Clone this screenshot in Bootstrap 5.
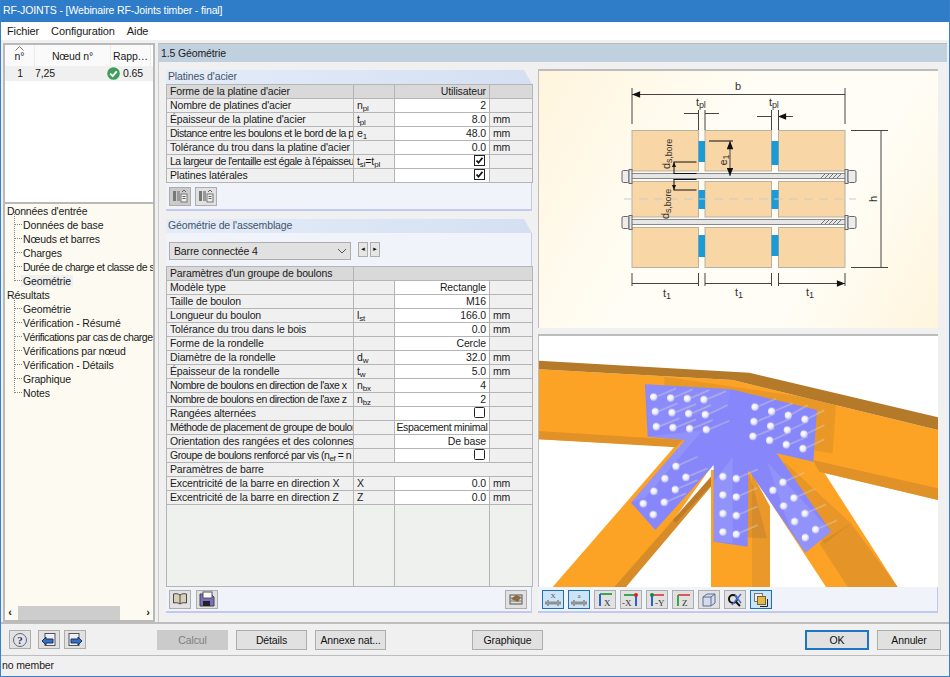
<!DOCTYPE html>
<html lang="fr">
<head>
    <meta charset="UTF-8">
    <meta name="viewport" content="width=device-width, initial-scale=1.0">
    <title>RF-JOINTS</title>
    <link rel="stylesheet" href="https://cdn.jsdelivr.net/npm/bootstrap@5.3.0/dist/css/bootstrap.min.css">
    <style>
        html, body { height: 100%; overflow: hidden; }
        body { background: #f0f0f0; font-family: "Liberation Sans", sans-serif; font-size: 10.5px; letter-spacing: -.13px; color: #1a1a1a; }
        .app-win { width: 950px; height: 677px; border-left: 1px solid #3a7fc9; border-right: 1px solid #3a7fc9; border-bottom: 1px solid #3a7fc9; }
        .title-bar { height: 22px; background: #2f7cc9; color: #fff; font-size: 10.5px; line-height: 21px; padding-left: 2px; }
        .menu-bar { height: 18px; background: #fff; font-size: 11px; line-height: 18px; padding-left: 6px; gap: 12px; }
        .main-area { height: 584px; padding: 3px 2px 0 2px; gap: 3px; border-bottom: 2px solid #bdbdbd; }

        .left-pane { width: 152px; }
        .node-list { height: 160px; background: #fff; border: 2px solid #b9b9b9; border-bottom-width: 1px; }
        .node-head { height: 21px; line-height: 22px; background: #fff; text-align: center; }
        .node-head > div { border-right: 1px solid #ececec; background: #fafafa; position: relative; }
        .sort-up { position: absolute; left: 10px; top: 1px; display: block; }
        .node-row { height: 15px; line-height: 15px; background: #f0f0f0; }
        .c-num { width: 30px; text-align: center; }
        .c-node { width: 76px; }
        .c-rap { width: 40px; }
        .tree-box { height: 420px; background: #fcfaf1; border: 2px solid #b9b9b9; border-top-width: 1px; padding: 0 0 0 2px; }
        .tree-list { line-height: 14px; white-space: nowrap; overflow: hidden; flex: 1; }
        .tree-list ul { list-style: none; margin: 0 0 0 7px; padding: 0; }
        .tree-list li { padding-left: 9px; position: relative; }
        .tree-list ul li::before { content: ""; position: absolute; left: 0; top: -6px; width: 8px; height: 13px; border-left: 1px dotted #888; border-bottom: 1px dotted #888; }
        .tree-sel { background: #f0f0f0; padding: 0 2px; margin-left: -2px; }
        .h-scroll { height: 14px; margin-left: -2px; font-size: 11px; }
        .h-scroll .thumb { width: 102px; background: #cdcdcd; margin-left: 3px; }
        .h-scroll b { width: 10px; text-align: center; line-height: 13px; }

        .right-pane { width: 789px; border-top: 1px solid #bbb; border-left: 1px solid #ccc; }
        .pane-head { height: 18px; line-height: 18px; background: #c0d0df; padding-left: 2px; font-size: 10.5px; }
        .pane-body { height: 551px; padding: 7px 8px 0 7px; gap: 6px; }
        .form-col { width: 366px; padding-top: 1px; }
        .grp-head { height: 14px; line-height: 13px; padding-left: 2px; color: #44546a; background: linear-gradient(to right, #e4ecf8, #d4e0f2); clip-path: polygon(0 0, 358px 0, 100% 100%, 0 100%); flex-shrink: 0; }
        .tool-strip { background: #f0f4fa; border-right: 1px solid #c2c8ee; border-bottom: 2px solid #c2c8ee; padding-left: 3px; flex-shrink: 0; }
        .tools-a { height: 28px; }
        .tools-b { height: 26px; }
        .select-strip { height: 33px; background: #f0f4fa; border-right: 1px solid #c2c8ee; padding: 9px 0 0 3px; gap: 7px; flex-shrink: 0; }
        .combo { width: 182px; height: 18px; line-height: 16px; background: #e1e1e1; border: 1px solid #adadad; padding-left: 4px; }
        .spin { width: 10px; height: 15px; background: #e6e6e6; border: 1px solid #adadad; font-size: 6px; line-height: 13px; text-align: center; }

        .grid-tbl { table-layout: fixed; width: 366px; border-collapse: collapse; margin: 0; }
        .grid-tbl > tbody > tr > td { height: 14px; padding: 0 3px; line-height: 13px; font-size: 10.5px; background: #f0f0f0; border: 1px solid #b5b5b5; white-space: nowrap; overflow: hidden; color: #1a1a1a; box-shadow: none; }
        .grid-tbl > tbody > tr > td.v-cell { background: #fff; text-align: right; }
        .grid-tbl > tbody > tr > td.g-cell { background: #d9d9d9; }
        .grid-tbl > tbody > tr.fill-row > td { background: #eef1ee; height: auto; }
        .grid-tbl sub { font-size: 8px; bottom: -.2em; }
        .grid-tbl > tbody > tr > td.lbl-tight, .lbl-tight { letter-spacing: -.47px; }
        .grid-tbl > tbody > tr > td.v-tight { letter-spacing: -.35px; padding: 0; }
        .sym { font-size: 10px; }
        .grow-tbl { flex: 1; min-height: 0; }
        .grow-tbl .grid-tbl { height: 100%; }
        .box-chk { display: block; margin-left: auto; margin-right: 1px; }

        .img-col { width: 400px; }
        .draw-a { height: 259px; flex-shrink: 0; background: linear-gradient(120deg, #fff5dd 0%, #fffdf5 40%, #fffdf6 70%, #fff5dd 100%); border-top: 2px solid #bcbcbc; border-left: 1px solid #bcbcbc; }
        .draw-b { height: 253px; flex-shrink: 0; margin-top: 6px; background: #fff; border-top: 2px solid #bcbcbc; border-left: 1px solid #bcbcbc; }
        .draw-a svg, .draw-b svg { display: block; }
        .tools-c { height: 26px; gap: 4px; padding-left: 4px; padding-top: 3px; align-items: flex-start; }

        .ico-btn { width: 22px; height: 19px; padding: 0; background: #e1e1e1; border: 1px solid #adadad; border-radius: 0; display: inline-flex; align-items: center; justify-content: center; }
        .ico-btn.is-on { background: #cce4f7; border: 1px solid #1f6fb2; }
        .ico-btn.is-off { background: #cbcbcb; }
        .tools-a .ico-btn { margin-right: 4px; }
        .tools-b .ico-btn { margin-right: 5px; }

        .foot-bar { height: 32px; padding-top: 6px; position: relative; border-bottom: 1px solid #bdbdbd; }
        .dlg-btn { height: 20px; width: 71px; padding: 0; font-size: 10.5px; letter-spacing: -.13px; line-height: 18px; background: #e1e1e1; border: 1px solid #adadad; border-radius: 0; color: #111; }
        .dlg-btn:disabled { background: #cbcbcb; color: #808080; border-color: #cbcbcb; opacity: 1; }
        .dlg-btn.is-def { border: 2px solid #1f74c4; line-height: 16px; }
        .w-64 { width: 64px; }
        .status-bar { height: 19px; line-height: 18px; padding-left: 1px; }
    </style>
</head>
<body>
<svg width="0" height="0" class="position-absolute">
    <defs>
        <symbol id="chk" viewBox="0 0 11 11"><rect x=".5" y=".5" width="10" height="10" fill="#fff" stroke="#222"/><path d="M2.5 5.5l2 2.2 4-5" fill="none" stroke="#111" stroke-width="1.8"/></symbol>
        <symbol id="unchk" viewBox="0 0 11 11"><rect x=".5" y=".5" width="10" height="10" rx="1" fill="#fff" stroke="#222"/></symbol>
        <symbol id="barrel" viewBox="0 0 16 14"><rect x="1" y="2" width="3" height="10" fill="#777"/><rect x="5" y="2" width="3" height="10" fill="#999"/><rect x="9" y="5" width="6" height="8" fill="#eee" stroke="#777"/><path d="M10.5 7.5h3M10.5 9.5h3M10 3l2-2 2 2" stroke="#666" fill="none"/></symbol>
        <radialGradient id="ballg" cx=".4" cy=".4" r=".7"><stop offset="0" stop-color="#fff"/><stop offset=".5" stop-color="#eeeef8"/><stop offset="1" stop-color="#b4b4e6"/></radialGradient>
        <circle id="ball" r="11" fill="url(#ballg)"/>
        <marker id="ah" viewBox="0 0 10 8" refX="10" refY="4" markerWidth="9" markerHeight="6.5" orient="auto-start-reverse"><path d="M0 0l10 4-10 4z" fill="#111"/></marker>
        <marker id="as" viewBox="0 0 10 8" refX="10" refY="4" markerWidth="5" markerHeight="4" orient="auto-start-reverse"><path d="M0 0l10 4-10 4z" fill="#111"/></marker>
    </defs>
</svg>

<div class="app-win d-flex flex-column">
    <div class="title-bar">RF-JOINTS - [Webinaire RF-Joints timber - final]</div>
    <div class="menu-bar d-flex"><span>Fichier</span><span>Configuration</span><span>Aide</span></div>

    <div class="main-area d-flex">
        <!-- left side -->
        <div class="left-pane d-flex flex-column">
            <div class="node-list">
                <div class="node-head d-flex">
                    <div class="c-num"><svg class="sort-up" width="9" height="5" viewBox="0 0 9 5"><path d="M.5 4.500L4.500 .5l4 4" fill="none" stroke="#777"/></svg>n°</div><div class="c-node">Nœud n°</div><div class="c-rap">Rapp…</div>
                </div>
                <div class="node-row d-flex">
                    <div class="c-num">1</div>
                    <div class="c-node">7,25</div>
                    <div class="c-rap d-flex align-items-center text-nowrap" style="margin-left:-4px;gap:3px">
                        <svg width="13" height="13" viewBox="0 0 12 12" class="flex-shrink-0"><circle cx="6" cy="6" r="5.8" fill="#3f9f5a"/><path d="M3 6.200l2.200 2.200L9 4" fill="none" stroke="#fff" stroke-width="1.700"/></svg>0.65
                    </div>
                </div>
            </div>
            <div class="tree-box d-flex flex-column">
                <div class="tree-list">
                    <div>Données d'entrée</div>
                    <ul>
                        <li>Données de base</li>
                        <li>Nœuds et barres</li>
                        <li>Charges</li>
                        <li class="lbl-tight">Durée de charge et classe de s</li>
                        <li><span class="tree-sel">Geométrie</span></li>
                    </ul>
                    <div>Résultats</div>
                    <ul>
                        <li>Geométrie</li>
                        <li>Vérification - Résumé</li>
                        <li class="lbl-tight">Vérifications par cas de charge</li>
                        <li>Vérifications par nœud</li>
                        <li>Vérification - Détails</li>
                        <li>Graphique</li>
                        <li>Notes</li>
                    </ul>
                </div>
                <div class="h-scroll d-flex"><b>‹</b><div class="thumb"></div><span class="flex-grow-1"></span><b>›</b></div>
            </div>
        </div>

        <!-- right side -->
        <div class="right-pane d-flex flex-column">
            <div class="pane-head">1.5 Géométrie</div>
            <div class="pane-body d-flex">
                <div class="form-col d-flex flex-column">
                    <div class="grp-head">Platines d'acier</div>
                    <table class="table table-bordered grid-tbl">
                        <colgroup><col style="width:187px"><col style="width:41px"><col style="width:95px"><col style="width:43px"></colgroup>
                        <tbody>
                        <tr><td class="g-cell">Forme de la platine d'acier</td><td class="g-cell"></td><td class="g-cell text-end">Utilisateur</td><td class="g-cell"></td></tr>
                        <tr><td>Nombre de platines d'acier</td><td class="sym">n<sub>pl</sub></td><td class="v-cell">2</td><td></td></tr>
                        <tr><td>Épaisseur de la platine d'acier</td><td class="sym">t<sub>pl</sub></td><td class="v-cell">8.0</td><td>mm</td></tr>
                        <tr><td class="lbl-tight">Distance entre les boulons et le bord de la p</td><td class="sym">e<sub>1</sub></td><td class="v-cell">48.0</td><td>mm</td></tr>
                        <tr><td>Tolérance du trou dans la platine d'acier</td><td></td><td class="v-cell">0.0</td><td>mm</td></tr>
                        <tr><td class="lbl-tight">La largeur de l'entaille est égale à l'épaisseu</td><td class="sym">t<sub>sl</sub>=t<sub>pl</sub></td><td class="v-cell"><svg class="box-chk" width="11" height="11"><use href="#chk"/></svg></td><td></td></tr>
                        <tr><td>Platines latérales</td><td></td><td class="v-cell"><svg class="box-chk" width="11" height="11"><use href="#chk"/></svg></td><td></td></tr>
                        </tbody>
                    </table>
                    <div class="tool-strip tools-a d-flex align-items-center">
                        <button class="ico-btn is-off"><svg width="16" height="14"><use href="#barrel"/></svg></button>
                        <button class="ico-btn"><svg width="16" height="14"><use href="#barrel"/></svg></button>
                    </div>

                    <div class="grp-head mt-2">Géométrie de l'assemblage</div>
                    <div class="select-strip d-flex">
                        <div class="combo d-flex justify-content-between">Barre connectée 4
                            <svg width="16" height="16" viewBox="0 0 16 16"><path d="M4 6l4 4 4-4" fill="none" stroke="#555"/></svg>
                        </div>
                        <div class="d-flex" style="gap:2px"><div class="spin">◄</div><div class="spin">►</div></div>
                    </div>
                    <div class="grow-tbl">
                    <table class="table table-bordered grid-tbl">
                        <colgroup><col style="width:187px"><col style="width:41px"><col style="width:95px"><col style="width:43px"></colgroup>
                        <tbody>
                        <tr><td class="g-cell">Paramètres d'un groupe de boulons</td><td class="g-cell" colspan="3"></td></tr>
                        <tr><td>Modèle type</td><td></td><td class="v-cell">Rectangle</td><td></td></tr>
                        <tr><td>Taille de boulon</td><td></td><td class="v-cell">M16</td><td></td></tr>
                        <tr><td>Longueur du boulon</td><td class="sym">l<sub>st</sub></td><td class="v-cell">166.0</td><td>mm</td></tr>
                        <tr><td>Tolérance du trou dans le bois</td><td></td><td class="v-cell">0.0</td><td>mm</td></tr>
                        <tr><td>Forme de la rondelle</td><td></td><td class="v-cell">Cercle</td><td></td></tr>
                        <tr><td>Diamètre de la rondelle</td><td class="sym">d<sub>w</sub></td><td class="v-cell">32.0</td><td>mm</td></tr>
                        <tr><td>Épaisseur de la rondelle</td><td class="sym">t<sub>w</sub></td><td class="v-cell">5.0</td><td>mm</td></tr>
                        <tr><td class="lbl-tight">Nombre de boulons en direction de l'axe x</td><td class="sym">n<sub>bx</sub></td><td class="v-cell">4</td><td></td></tr>
                        <tr><td class="lbl-tight">Nombre de boulons en direction de l'axe z</td><td class="sym">n<sub>bz</sub></td><td class="v-cell">2</td><td></td></tr>
                        <tr><td>Rangées alternées</td><td></td><td class="v-cell"><svg class="box-chk" width="11" height="11"><use href="#unchk"/></svg></td><td></td></tr>
                        <tr><td class="lbl-tight">Méthode de placement de groupe de boulor</td><td></td><td class="v-cell text-center v-tight">Espacement minimal</td><td></td></tr>
                        <tr><td>Orientation des rangées et des colonnes</td><td></td><td class="v-cell">De base</td><td></td></tr>
                        <tr><td class="lbl-tight">Groupe de boulons renforcé par vis (n<sub>ef</sub> = n</td><td></td><td class="v-cell"><svg class="box-chk" width="11" height="11"><use href="#unchk"/></svg></td><td></td></tr>
                        <tr><td>Paramètres de barre</td><td colspan="3"></td></tr>
                        <tr><td>Excentricité de la barre en direction X</td><td>X</td><td class="v-cell">0.0</td><td>mm</td></tr>
                        <tr><td>Excentricité de la barre en direction Z</td><td>Z</td><td class="v-cell">0.0</td><td>mm</td></tr>
                        <tr class="fill-row"><td></td><td></td><td></td><td></td></tr>
                        </tbody>
                    </table>
                    </div>
                    <div class="tool-strip tools-b d-flex align-items-center">
                        <button class="ico-btn"><svg width="16" height="14" viewBox="0 0 16 14"><path d="M8 3C6 1.500 3.500 1.500 1.500 2v9c2-.5 4.500-.5 6.500 1 2-1.500 4.500-1.500 6.500-1V2C12.500 1.500 10 1.500 8 3z" fill="#d8cfb8" stroke="#444"/><path d="M8 3v9" stroke="#444"/></svg></button>
                        <button class="ico-btn"><svg width="16" height="16" viewBox="0 0 16 16"><path d="M1 3h11l3 3v9H1z" fill="#7b6fc4" stroke="#444"/><rect x="4" y="1" width="9" height="6" fill="#fff" stroke="#555"/><rect x="4" y="10" width="7" height="5" fill="#222"/></svg></button>
                        <button class="ico-btn ms-auto" style="margin-right:4px"><svg width="16" height="14" viewBox="0 0 16 14"><rect x="2" y="3" width="12" height="9" fill="#ddd" stroke="#555"/><path d="M2 6h12M2 9h12" stroke="#777"/><path d="M3 7l5-4 5 2-3 5z" fill="#8b6a3e"/></svg></button>
                    </div>
                </div>

                <div class="img-col d-flex flex-column">
                    <div class="draw-a">
                        <svg width="399" height="257" viewBox="539 71 399 257" font-family="Liberation Sans, sans-serif" font-size="11" fill="#333">
                            <g fill="#f8d6a6" stroke="#b9b2a4">
                                <rect x="632" y="130.500" width="66.500" height="40.500"/><rect x="705" y="130.500" width="66.500" height="40.500"/><rect x="778.500" y="130.500" width="66.500" height="40.500"/>
                                <rect x="632" y="181.500" width="66.500" height="35.500"/><rect x="705" y="181.500" width="66.500" height="35.500"/><rect x="778.500" y="181.500" width="66.500" height="35.500"/>
                                <rect x="632" y="227.500" width="66.500" height="40"/><rect x="705" y="227.500" width="66.500" height="40"/><rect x="778.500" y="227.500" width="66.500" height="40"/>
                            </g>
                            <g fill="#1b9ad6">
                                <rect x="698.500" y="141" width="6.500" height="21"/><rect x="771.500" y="141" width="7" height="24"/>
                                <rect x="698.500" y="190" width="6.500" height="19"/><rect x="771.500" y="190" width="7" height="19"/>
                                <rect x="698.500" y="235" width="6.500" height="22"/><rect x="771.500" y="235" width="7" height="21"/>
                            </g>
                            <path d="M624 199H856" stroke="#ccc" stroke-dasharray="9 6" fill="none"/>
                            <g>
                                <rect x="628" y="173.500" width="222" height="5" fill="#e6e6e6" stroke="#888"/>
                                <rect x="628" y="219.500" width="222" height="5" fill="#e6e6e6" stroke="#888"/>
                                <path d="M825 174l-4 4M829 174l-4 4M833 174l-4 4M837 174l-4 4M841 174l-4 4M825 220l-4 4M829 220l-4 4M833 220l-4 4M837 220l-4 4M841 220l-4 4" stroke="#777"/>
                                <g fill="#ececec" stroke="#666">
                                    <rect x="622" y="170.500" width="7" height="12" rx="1.500"/><rect x="629" y="169.500" width="3" height="14"/>
                                    <rect x="622" y="216.500" width="7" height="12" rx="1.500"/><rect x="629" y="215.500" width="3" height="14"/>
                                    <rect x="845" y="169.500" width="3" height="14"/><rect x="848" y="170.500" width="8" height="12" rx="1.500"/>
                                    <rect x="845" y="215.500" width="3" height="14"/><rect x="848" y="216.500" width="8" height="12" rx="1.500"/>
                                </g>
                            </g>
                            <g stroke="#444" fill="none">
                                <path d="M632 88v36M845 88v36M698.500 110v20M705 110v20M771.500 110v20M778.500 110v20M851 130.500h37M851 267.500h37M632 273v13M698.500 273v13M705 273v13M771.500 273v13M778.500 273v13M845 273v13"/>
                                <path d="M632 94.500H845M881 131V267M632 283.500H698M705 283.500H771M778.500 283.500H845" marker-start="url(#ah)" marker-end="url(#ah)"/>
                                <path d="M684 113.500h14M719 113.500h-14M757 116.500h14M793 116.500h-15" marker-end="url(#ah)"/>
                                <path d="M709 141h24" stroke="#111"/>
                                <path d="M730 141V176" marker-start="url(#ah)" marker-end="url(#ah)"/>
                                <path d="M673.500 162h23M673.500 173.500h23M673.500 179.500h23M673.500 190h23" stroke="#111"/>
                                <path d="M674 162V173.500M674 179.500V190" stroke="#111" marker-start="url(#as)" marker-end="url(#as)"/>
                            </g>
                            <text x="738" y="90" text-anchor="middle">b</text>
                            <text x="696" y="106">t<tspan font-size="9" dy="2">pl</tspan></text>
                            <text x="769" y="106">t<tspan font-size="9" dy="2">pl</tspan></text>
                            <text x="663" y="297">t<tspan font-size="9" dy="2">1</tspan></text>
                            <text x="735" y="296">t<tspan font-size="9" dy="2">1</tspan></text>
                            <text x="806" y="296">t<tspan font-size="9" dy="2">1</tspan></text>
                            <text transform="translate(877 199) rotate(-90)" text-anchor="middle">h</text>
                            <text transform="translate(727 160) rotate(-90)" text-anchor="middle">e<tspan font-size="9" dy="2">1</tspan></text>
                            <text transform="translate(670 169) rotate(-90)">d<tspan font-size="9" dy="2">s,bore</tspan></text>
                            <text transform="translate(669 219) rotate(-90)">d<tspan font-size="9" dy="2">s,bore</tspan></text>
                        </svg>
                    </div>
                    <div class="draw-b">
                        <svg width="399" height="251" viewBox="9 18 1197 753">
                            <!-- members -->
                            <path d="M50 771L420 345 530 405 270 771z" fill="#fca326"/>
                            <path d="M235 771L525 440V470L270 771z" fill="#d78c28"/>
                            <path d="M525 771V420H640L702 530V771z" fill="#fca326"/>
                            <path d="M648 771V430L702 530V771z" fill="#ea982a"/>
                            <path d="M870 771L640 420 720 365 850 405 1085 771z" fill="#fca326"/>
                            <path d="M935 771L850 640 945 580 1085 771z" fill="#e59528"/>
                            <path d="M8 118L590 150 1206 300V510L850 425 720 370 440 350 8 328z" fill="#fca326"/>
                            <path d="M8 92L640 128 1206 262V300L590 150 8 118z" fill="#b47a2a"/>
                            <path d="M8 303L440 330 420 352 8 328zM830 390L1206 475V510L850 425z" fill="#e09228"/>
                            <path d="M385 140L900 215 890 370 385 300z" fill="#a9702a" opacity=".22"/>
                            <path d="M750 400L945 580 865 642 690 400z" fill="#a9702a" opacity=".25"/>
                            <path d="M640 430L693 625 600 620z" fill="#a9702a" opacity=".3"/>
                            <path d="M525 440L410 570 420 578 525 465z" fill="#a9702a" opacity=".55"/>
                            <!-- gusset plate -->
                            <path d="M327 163L585 178 843 240 832 395 722 370 885 605 808 668 637 420 635 650 533 635 533 405 358 600 285 518 447 330 335 320z" fill="#8787fb"/>
                            <g fill="#9d9dfa" opacity=".5">
                                <path d="M335 320L500 300 330 500 285 518 447 330z"/>
                                <path d="M533 635V455L590 380V640z"/>
                                <path d="M693 395L885 605 808 668 760 590z"/>
                                <path d="M327 163L585 178 575 225 340 300z" opacity=".45"/>
                            </g>
                            <g stroke="#d9d9d0" stroke-width="4" opacity=".55" fill="none">
                                <path d="M355 203L420 175M405 206L470 178M455 208L520 180M505 211L570 183M360 247L425 220M410 250L480 222M460 253L525 225M510 256L575 225M363 292L430 265M413 295L480 268M463 298L530 270M513 301L580 272"/>
                                <path d="M660 232L720 206M710 245L770 220M760 257L815 225M810 269L865 240M656 277L715 252M706 290L765 265M756 302L815 275M806 314L865 285M653 320L715 295M703 333L765 305M753 346L815 320M803 357L865 328"/>
                                <path d="M420 409L485 380M450 442L515 415M418 479L485 450M387 517L450 490"/>
                                <path d="M601 446L665 418M601 501L665 473M601 557L665 529M601 613L665 585"/>
                                <path d="M741 457L805 428M774 504L838 476M807 551L870 523M839 599L903 571"/>
                            </g>
                            <!-- bolts -->
                            <g>
                                <use href="#ball" x="353" y="201"/><use href="#ball" x="404" y="204"/><use href="#ball" x="454" y="206"/><use href="#ball" x="504" y="209"/>
                                <use href="#ball" x="358" y="245"/><use href="#ball" x="408" y="248"/><use href="#ball" x="458" y="251"/><use href="#ball" x="508" y="254"/>
                                <use href="#ball" x="361" y="290"/><use href="#ball" x="411" y="293"/><use href="#ball" x="461" y="296"/><use href="#ball" x="511" y="299"/>
                                <use href="#ball" x="657" y="231"/><use href="#ball" x="707" y="244"/><use href="#ball" x="757" y="256"/><use href="#ball" x="807" y="268"/>
                                <use href="#ball" x="654" y="275"/><use href="#ball" x="704" y="288"/><use href="#ball" x="754" y="300"/><use href="#ball" x="804" y="312"/>
                                <use href="#ball" x="651" y="319"/><use href="#ball" x="701" y="331"/><use href="#ball" x="751" y="344"/><use href="#ball" x="801" y="356"/>
                                <use href="#ball" x="420" y="409"/><use href="#ball" x="387" y="446"/><use href="#ball" x="450" y="442"/><use href="#ball" x="354" y="484"/>
                                <use href="#ball" x="418" y="479"/><use href="#ball" x="322" y="521"/><use href="#ball" x="385" y="517"/><use href="#ball" x="352" y="554"/>
                                <use href="#ball" x="561" y="440"/><use href="#ball" x="601" y="446"/><use href="#ball" x="561" y="495"/><use href="#ball" x="601" y="501"/>
                                <use href="#ball" x="561" y="551"/><use href="#ball" x="601" y="557"/><use href="#ball" x="561" y="606"/><use href="#ball" x="601" y="613"/>
                                <use href="#ball" x="741" y="457"/><use href="#ball" x="711" y="481"/><use href="#ball" x="774" y="504"/><use href="#ball" x="743" y="528"/>
                                <use href="#ball" x="807" y="551"/><use href="#ball" x="776" y="575"/><use href="#ball" x="839" y="599"/><use href="#ball" x="808" y="623"/>
                            </g>
                        </svg>
                    </div>
                    <div class="tool-strip tools-c d-flex">
                        <button class="ico-btn is-on"><svg width="18" height="16" viewBox="0 0 18 16"><text x="9" y="6" font-size="7" text-anchor="middle" font-family="Liberation Serif, serif" fill="#555">X</text><path d="M1 11h16" stroke="#8f8f8f" stroke-width="3"/><path d="M4 8v6M14 8v6" stroke="#999" stroke-width="2"/></svg></button>
                        <button class="ico-btn is-on"><svg width="18" height="16" viewBox="0 0 18 16"><text x="9" y="6" font-size="7" text-anchor="middle" font-family="Liberation Serif, serif" fill="#555">a</text><path d="M1 11h16" stroke="#8f8f8f" stroke-width="3"/><path d="M4 8v6M14 8v6" stroke="#999" stroke-width="2"/></svg></button>
                        <button class="ico-btn"><svg width="18" height="16" viewBox="0 0 18 16"><path d="M4 2h12" stroke="#3aa655" stroke-width="2"/><path d="M4 2v12" stroke="#2f5fd0" stroke-width="2"/><text x="8" y="14" font-size="9" font-family="Liberation Serif, serif" fill="#333">X</text></svg></button>
                        <button class="ico-btn"><svg width="18" height="16" viewBox="0 0 18 16"><path d="M2 3h12" stroke="#3aa655" stroke-width="2"/><path d="M14 3v11" stroke="#2f5fd0" stroke-width="2"/><circle cx="14" cy="3" r="2" fill="#d22"/><text x="0" y="14" font-size="9" font-family="Liberation Serif, serif" fill="#333">-X</text></svg></button>
                        <button class="ico-btn"><svg width="18" height="16" viewBox="0 0 18 16"><path d="M4 3h12" stroke="#d85a5a" stroke-width="2"/><path d="M4 3v11" stroke="#2f5fd0" stroke-width="2"/><circle cx="4" cy="3" r="2" fill="#184"/><text x="7" y="14" font-size="9" font-family="Liberation Serif, serif" fill="#333">-Y</text></svg></button>
                        <button class="ico-btn"><svg width="18" height="16" viewBox="0 0 18 16"><path d="M4 3h12" stroke="#d85a5a" stroke-width="2"/><path d="M4 3v11" stroke="#3aa655" stroke-width="2"/><text x="8" y="14" font-size="9" font-family="Liberation Serif, serif" fill="#333">Z</text></svg></button>
                        <button class="ico-btn"><svg width="16" height="16" viewBox="0 0 16 16"><path d="M2 5l4-3h8v9l-4 3H2zM2 5h8v9M10 5l4-3" fill="#d5dbea" stroke="#5c6f92"/></svg></button>
                        <button class="ico-btn"><svg width="18" height="16" viewBox="0 0 18 16"><circle cx="7" cy="7" r="4" fill="none" stroke="#111" stroke-width="2"/><path d="M10 10l4 4" stroke="#111" stroke-width="2"/><path d="M6 13L15 2M9 3l6 8" stroke="#4a6fd0" stroke-width="1.500"/></svg></button>
                        <button class="ico-btn is-on"><svg width="16" height="16" viewBox="0 0 16 16"><rect x="1.500" y="1.500" width="8" height="8" fill="#eee" stroke="#777"/><rect x="4.500" y="4.500" width="8" height="8" fill="#e6b84a" stroke="#7a6428"/><path d="M14.500 7v7.500H7" fill="none" stroke="#222"/></svg></button>
                    </div>
                </div>
            </div>
        </div>
    </div>

    <div class="foot-bar d-flex">
        <button class="ico-btn" style="margin-left:8px"><svg width="16" height="16" viewBox="0 0 16 16"><circle cx="8" cy="8" r="6.500" fill="#dfe3ee" stroke="#667"/><text x="8" y="12" font-size="11" font-weight="bold" text-anchor="middle" font-family="Liberation Serif, serif" fill="#334">?</text></svg></button>
        <button class="ico-btn" style="margin-left:7px"><svg width="16" height="16" viewBox="0 0 16 16"><rect x="4" y="1.500" width="10" height="12" fill="#eef" stroke="#555"/><path d="M1 9l4-4v2h7v4H5v2z" fill="#2f6fd0" stroke="#234"/></svg></button>
        <button class="ico-btn" style="margin-left:4px"><svg width="16" height="16" viewBox="0 0 16 16"><rect x="2" y="1.500" width="10" height="12" fill="#eef" stroke="#555"/><path d="M15 9l-4-4v2H4v4h7v2z" fill="#2f6fd0" stroke="#234"/></svg></button>
        <button class="btn dlg-btn" style="margin-left:71px" disabled>Calcul</button>
        <button class="btn dlg-btn" style="margin-left:8px">Détails</button>
        <button class="btn dlg-btn" style="margin-left:8px">Annexe nat...</button>
        <button class="btn dlg-btn" style="margin-left:86px">Graphique</button>
        <button class="btn dlg-btn is-def w-64" style="margin-left:262px">OK</button>
        <button class="btn dlg-btn w-64" style="margin-left:8px">Annuler</button>
    </div>
    <div class="status-bar">no member</div>
</div>
<script src="https://cdn.jsdelivr.net/npm/bootstrap@5.3.0/dist/js/bootstrap.bundle.min.js"></script>
</body>
</html>
